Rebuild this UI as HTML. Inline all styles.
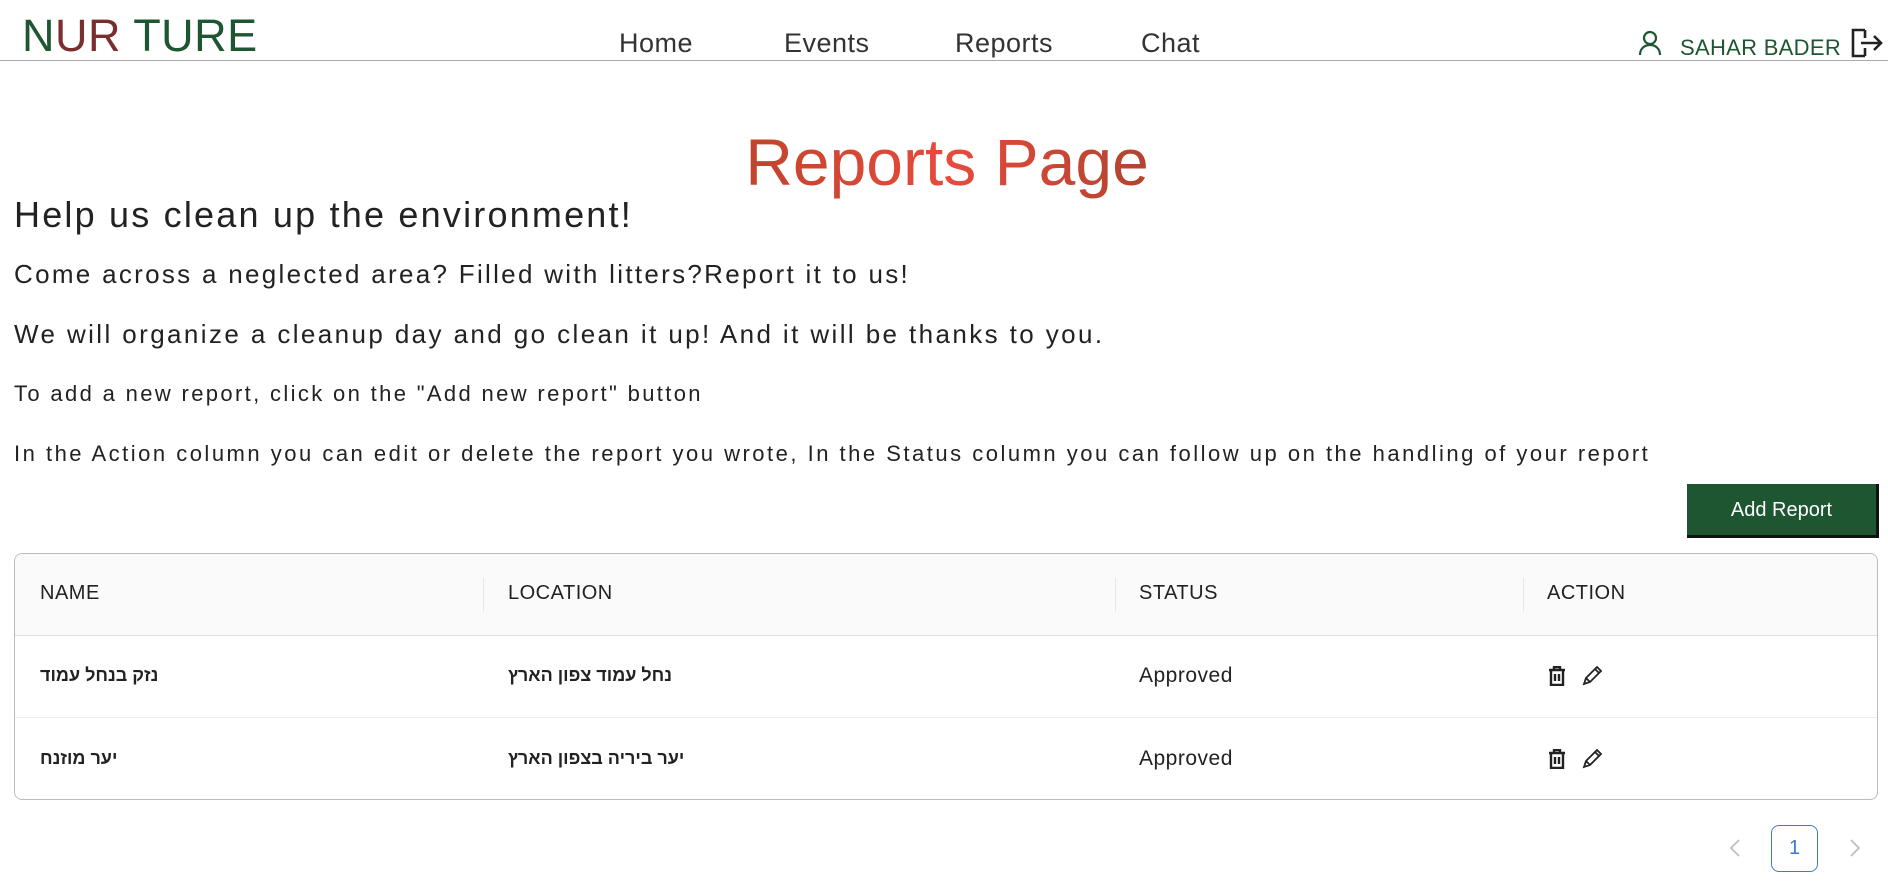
<!DOCTYPE html>
<html><head><meta charset="utf-8"><style>
*{margin:0;padding:0;box-sizing:border-box}
body{width:1888px;height:894px;background:#fff;font-family:"Liberation Sans","Noto Sans CJK SC",sans-serif;color:#222;position:relative;overflow:hidden}
.a{position:absolute;white-space:nowrap}
.hdr{position:absolute;left:0;top:60px;width:1888px;height:1px;background:#aaa}
.nav{font-size:27px;color:#333;top:28px;letter-spacing:.5px}
p.a{left:14px;color:#222}
.th{top:582px;font-size:20px;color:#222;letter-spacing:.5px}
.sep{position:absolute;top:578px;width:1px;height:34px;background:#e8e8e8}
.heb{font-weight:bold;font-size:18px;font-family:"Liberation Sans","DejaVu Sans",sans-serif}
.st{font-size:21px;letter-spacing:.5px}
</style></head><body>
<div class="a" style="left:22px;top:10px;font-size:45px;letter-spacing:0.5px;color:#1e5631">N<span style="color:#7a2e2e">UR</span> TURE</div>
<div class="hdr"></div>
<div class="a nav" style="left:619px">Home</div>
<div class="a nav" style="left:784px">Events</div>
<div class="a nav" style="left:955px">Reports</div>
<div class="a nav" style="left:1141px">Chat</div>
<svg class="a" style="left:1638px;top:30px" width="24" height="26" viewBox="0 0 24 26" fill="none" stroke="#1e5631" stroke-width="2.2"><circle cx="12" cy="8" r="6"/><path d="M2 25c0-6 4-10 10-10s10 4 10 10"/></svg>
<div class="a" style="left:1680px;top:35px;font-size:22px;color:#1e5631;letter-spacing:.3px">SAHAR BADER</div>
<svg class="a" style="left:1851px;top:28px" width="32" height="30" viewBox="0 0 32 30" fill="none" stroke="#222" stroke-width="2.6"><path d="M14 2H2v26h12M14 2v8M14 20v8M10 15h20M23 8l7 7-7 7"/></svg>
<div class="a" style="left:0;width:1888px;text-align:center;top:124px;font-size:66px;text-indent:6px"><span style="background:linear-gradient(90deg,#c0442c,#e84a3c 50%,#b04430);-webkit-background-clip:text;color:transparent">Reports Page</span></div>
<p class="a" style="top:194px;font-size:36px;letter-spacing:2.2px">Help us clean up the environment!</p>
<p class="a" style="top:259px;font-size:26px;letter-spacing:2.3px">Come across a neglected area? Filled with litters?Report it to us!</p>
<p class="a" style="top:319px;font-size:26px;letter-spacing:2.4px">We will organize a cleanup day and go clean it up! And it will be thanks to you.</p>
<p class="a" style="top:381px;font-size:22px;letter-spacing:2.35px">To add a new report, click on the "Add new report" button</p>
<p class="a" style="top:441px;font-size:22px;letter-spacing:2.5px">In the Action column you can edit or delete the report you wrote, In the Status column you can follow up on the handling of your report</p>
<div class="a" style="left:1687px;top:484px;width:192px;height:54px;background:#1e5631;border-right:3px solid #111;border-bottom:3px solid #111;color:#fff;font-size:20px;text-align:center;line-height:52px">Add Report</div>
<div class="a" style="left:14px;top:553px;width:1864px;height:247px;border:1px solid #bbb;border-radius:8px;overflow:hidden">
 <div style="height:82px;background:#fafafa;border-bottom:1px solid #ddd"></div>
 <div style="height:82px;border-bottom:1px solid #eee"></div>
</div>
<div class="sep" style="left:483px"></div><div class="sep" style="left:1115px"></div><div class="sep" style="left:1523px"></div>
<div class="a th" style="left:40px">NAME</div>
<div class="a th" style="left:508px">LOCATION</div>
<div class="a th" style="left:1139px">STATUS</div>
<div class="a th" style="left:1547px">ACTION</div>
<div class="a heb" dir="rtl" style="left:40px;top:665px">נזק בנחל עמוד</div>
<div class="a heb" dir="rtl" style="left:508px;top:665px">נחל עמוד צפון הארץ</div>
<div class="a st" style="left:1139px;top:664px">Approved</div>
<div class="a heb" dir="rtl" style="left:40px;top:748px">יער מוזנח</div>
<div class="a heb" dir="rtl" style="left:508px;top:748px">יער ביריה בצפון הארץ</div>
<div class="a st" style="left:1139px;top:747px">Approved</div>
<svg class="a" style="left:1548px;top:666px" width="18" height="20" viewBox="0 0 18 20" fill="none" stroke="#222" stroke-width="2.4"><path d="M1 4h16M6 4V1h6v3M3 4v15h12V4M7 8v7M11 8v7"/></svg>
<svg class="a" style="left:1582px;top:664px" width="22" height="22" viewBox="0 0 22 22" fill="none" stroke="#222" stroke-width="1.8"><path d="M2 20l2-6L15 3l4 4L8 18zM13 5l4 4M4 14l4 4"/></svg>
<svg class="a" style="left:1548px;top:749px" width="18" height="20" viewBox="0 0 18 20" fill="none" stroke="#222" stroke-width="2.4"><path d="M1 4h16M6 4V1h6v3M3 4v15h12V4M7 8v7M11 8v7"/></svg>
<svg class="a" style="left:1582px;top:747px" width="22" height="22" viewBox="0 0 22 22" fill="none" stroke="#222" stroke-width="1.8"><path d="M2 20l2-6L15 3l4 4L8 18zM13 5l4 4M4 14l4 4"/></svg>
<svg class="a" style="left:1728px;top:838px" width="14" height="20" viewBox="0 0 14 20" fill="none" stroke="#bbb" stroke-width="1.6"><path d="M11 2L3 10l8 8"/></svg>
<div class="a" style="left:1771px;top:825px;width:47px;height:47px;border:1.5px solid #3a7bd5;border-radius:8px;color:#3a7bd5;font-size:20px;text-align:center;line-height:44px">1</div>
<svg class="a" style="left:1848px;top:838px" width="14" height="20" viewBox="0 0 14 20" fill="none" stroke="#bbb" stroke-width="1.6"><path d="M3 2l8 8-8 8"/></svg>
</body></html>
